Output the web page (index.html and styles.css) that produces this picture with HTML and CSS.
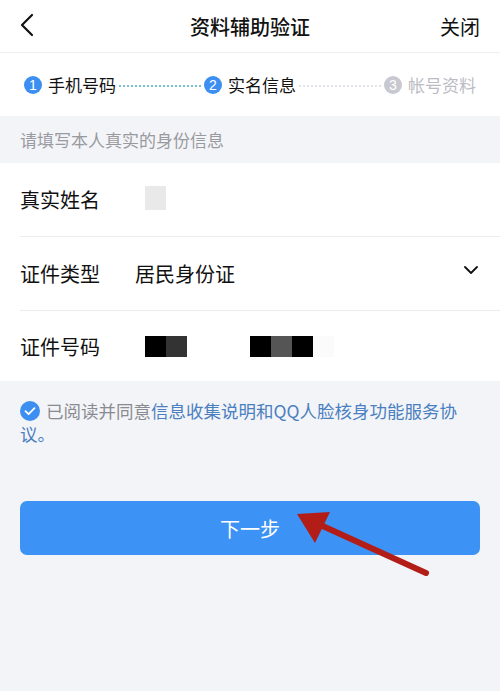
FILE: index.html
```html
<!DOCTYPE html>
<html lang="zh-CN">
<head>
    <meta charset="UTF-8">
    <meta name="viewport" content="width=device-width, initial-scale=1.0">
    <title>资料辅助验证</title>
    <link rel="stylesheet" href="styles.css">
</head>
<body>
<!-- 顶部导航 -->
<div class="nav">
    <svg class="nav-back" width="14" height="24" viewBox="0 0 14 24">
        <path d="M12 2 L2 12 L12 22" fill="none" stroke="#111" stroke-width="2.2" stroke-linecap="round" stroke-linejoin="round"/>
    </svg>
    <div class="nav-title">资料辅助验证</div>
    <div class="nav-close">关闭</div>
</div>

<!-- 步骤条 -->
<div class="steps">
    <div class="step active"><span class="step-num">1</span>手机号码</div>
    <div class="step-line done"></div>
    <div class="step active"><span class="step-num">2</span>实名信息</div>
    <div class="step-line"></div>
    <div class="step"><span class="step-num">3</span>帐号资料</div>
</div>

<div class="tip">请填写本人真实的身份信息</div>

<!-- 表单 -->
<div class="form">
    <div class="row">
        <div class="label">真实姓名</div>
        <div class="value">
            <span class="mask light"></span>
        </div>
    </div>
    <div class="row">
        <div class="label">证件类型</div>
        <div class="value">居民身份证</div>
        <svg class="row-arrow" width="14" height="9" viewBox="0 0 14 9">
            <path d="M1 1 L7 7 L13 1" fill="none" stroke="#111" stroke-width="1.8" stroke-linecap="round" stroke-linejoin="round"/>
        </svg>
    </div>
    <div class="row">
        <div class="label">证件号码</div>
        <div class="value">
            <span class="mask-group">
                <span class="mask"></span><span class="mask dark"></span>
            </span>
            <span class="mask-group second">
                <span class="mask"></span><span class="mask gray"></span><span class="mask"></span><span class="mask faint"></span>
            </span>
        </div>
    </div>
</div>

<!-- 协议 -->
<div class="agree">
    <div class="agree-line">
        <svg class="agree-check" width="20" height="20" viewBox="0 0 20 20">
            <circle cx="10" cy="10" r="10" fill="#3c8ff0"/>
            <path d="M5.5 10.2 L8.6 13.2 L14.5 7.2" fill="none" stroke="#fff" stroke-width="1.8" stroke-linecap="round" stroke-linejoin="round"/>
        </svg>已阅读并同意<span class="link">信息收集说明和QQ人脸核身功能服务协</span>
    </div>
    <div class="agree-line link">议。</div>
</div>

<div class="btn-wrap">
    <button class="btn">下一步</button>
    <!-- 红色箭头标注 -->
    <svg class="mark-arrow" width="150" height="80" viewBox="0 0 150 80">
        <path d="M136 72 L26 22" fill="none" stroke="#b21d18" stroke-width="6" stroke-linecap="round"/>
        <path d="M7 13 L40 11 L25 42 Z" fill="#b21d18"/>
    </svg>
</div>
</body>
</html>
```

FILE: styles.css
```css
/* 基本样式 */
body {
    margin: 0;
    background-color: #f3f4f8;
    font-family: "Noto Sans CJK SC", "Noto Sans", sans-serif;
    color: #111;
}

/* 导航栏 */
.nav {
    height: 52px;
    background-color: #fff;
    border-bottom: 1px solid #eeeff3;
    display: flex;
    align-items: center;
    justify-content: space-between;
    padding: 0 20px;
    position: relative;
}
.nav-back {
    display: block;
    margin-top: -2px;
}
.nav-title {
    position: absolute;
    left: 0;
    right: 0;
    text-align: center;
    font-size: 20px;
    font-weight: 500;
    pointer-events: none;
}
.nav-close {
    font-size: 20px;
}

/* 步骤条 */
.steps {
    height: 63px;
    background-color: #fff;
    display: flex;
    align-items: center;
    padding: 0 24px 0 24px;
    margin-bottom: 1px;
}
.step {
    display: flex;
    align-items: center;
    font-size: 17px;
    color: #bbbcc3;
}
.step.active {
    color: #111;
}
.step-num {
    width: 18px;
    height: 18px;
    border-radius: 50%;
    background-color: #c8c9d0;
    color: #fff;
    font-size: 14px;
    line-height: 18px;
    text-align: center;
    margin-right: 6px;
    font-family: "Liberation Sans", sans-serif;
}
.step.active .step-num {
    background-color: #3c8ff0;
}
.step-line {
    flex: 1;
    height: 0;
    border-top: 2px dotted #e2e3e8;
    margin: 2px 3px 0;
}
.step-line.done {
    border-top-color: #79bfd0;
}

.tip {
    height: 46px;
    line-height: 46px;
    padding-left: 20px;
    font-size: 17px;
    color: #999aa0;
}

/* 表单 */
.form {
    background-color: #fff;
    padding-left: 20px;
}
.row {
    height: 73px;
    display: flex;
    align-items: center;
    border-bottom: 1px solid #ececf0;
    padding-right: 22px;
}
.row:last-child {
    border-bottom: none;
    height: 70px;
}
.label {
    width: 115px;
    font-size: 20px;
}
.value {
    flex: 1;
    font-size: 20px;
    display: flex;
    align-items: center;
}
.row-arrow {
    display: block;
    margin-top: -6px;
}
.mask {
    display: inline-block;
    width: 21px;
    height: 21px;
    background-color: #000;
}
.mask.light {
    background-color: #e9e9e9;
    height: 24px;
    margin: -3px 0 0 10px;
}
.mask.dark {
    background-color: #333;
}
.mask.gray {
    background-color: #555;
}
.mask.faint {
    background-color: #fbfbfb;
}
.mask-group {
    display: flex;
    margin-left: 10px;
}
.mask-group.second {
    margin-left: 63px;
}

/* 协议 */
.agree {
    padding: 18px 20px 0;
    font-size: 17.5px;
    line-height: 23px;
    color: #8a8b91;
}
.agree-line {
    white-space: nowrap;
}
.agree-check {
    vertical-align: -3px;
    margin-right: 6px;
}
.link {
    color: #4a7fc0;
}

/* 按钮 */
.btn-wrap {
    margin: 56px 20px 0;
    padding-bottom: 40px;
    position: relative;
}
.btn {
    display: block;
    width: 100%;
    height: 54px;
    border: none;
    border-radius: 7px;
    background-color: #3c92f5;
    color: #fff;
    font-size: 20px;
    font-family: "Noto Sans CJK SC", sans-serif;
}
.mark-arrow {
    position: absolute;
    left: 270px;
    top: 0;
}
```
